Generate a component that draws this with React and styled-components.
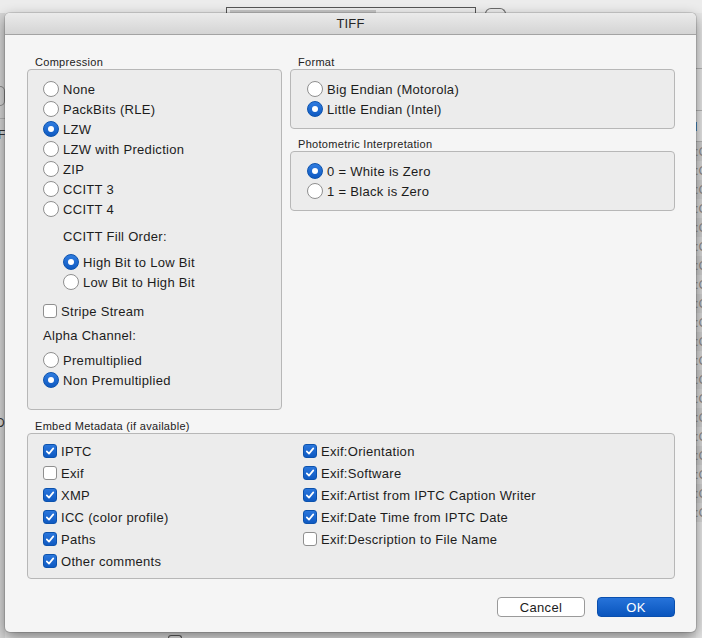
import React, { useState } from 'react';
import styled, { createGlobalStyle } from 'styled-components';

const GlobalStyle = createGlobalStyle`
  html, body {
    margin: 0;
    padding: 0;
  }
  body {
    background: #dcdcdc;
    font-family: "Liberation Sans", Arial, sans-serif;
  }
`;

const Page = styled.div`
  width: 702px;
  height: 638px;
  overflow: hidden;
  display: flex;
  flex-direction: column;
  background: #e2e2e2;
`;

const TopBar = styled.div`
  height: 13px;
  flex: none;
  display: flex;
  align-items: flex-start;
  gap: 9px;
  padding-left: 226px;
  background: #ececec;
  overflow: hidden;
`;

const PathField = styled.div`
  margin-top: 7px;
  width: 250px;
  height: 12px;
  box-sizing: border-box;
  padding: 2px 3px 0;
  border: 1px solid #565656;
  border-bottom: none;
  background: #eeeeee;
`;

const PathFill = styled.div`
  width: 146px;
  height: 3px;
  background: #c7c7c7;
`;

const RoundButton = styled.div`
  margin-top: 8px;
  width: 19px;
  height: 12px;
  border: 1px solid #6a6a6a;
  border-bottom: none;
  border-radius: 6px 6px 0 0;
`;

const Middle = styled.div`
  flex: 1;
  min-height: 0;
  display: flex;
`;

const LeftEdge = styled.div`
  width: 5px;
  flex: none;
  display: flex;
  flex-direction: column;
  overflow: hidden;
  background: #d6d6d6;
  font-size: 12px;
  color: #333;
  white-space: nowrap;
`;

const EdgeButton = styled.div`
  margin-top: 73px;
  height: 20px;
  width: 5px;
  border: 1px solid #8a8a8a;
  border-left: none;
  border-radius: 0 6px 6px 0;
  box-sizing: border-box;
`;

const EdgeLine = styled.div`
  height: ${(p) => p.$h}px;
  flex: none;
  border-bottom: 1px solid #b4b4b4;
`;

const EdgeText = styled.div`
  height: ${(p) => p.$h}px;
  line-height: ${(p) => p.$h}px;
  margin-top: ${(p) => p.$top}px;
  margin-left: ${(p) => p.$shift}px;
  flex: none;
`;

const RightEdge = styled.div`
  flex: 1;
  display: flex;
  flex-direction: column;
  overflow: hidden;
  background: #e6e6e6;
  font-size: 13px;
  white-space: nowrap;
`;

const ListRow = styled.div`
  height: 19px;
  line-height: 19px;
  flex: none;
  margin-left: -1px;
  color: #8d8d8d;
  background: ${(p) => (p.$alt ? '#d9d9d9' : '#d0d0d0')};
`;

const SheetColumn = styled.div`
  width: 691px;
  flex: none;
  display: flex;
  flex-direction: column;
`;

const Sheet = styled.div`
  position: relative;
  z-index: 1;
  height: 619px;
  flex: none;
  display: flex;
  flex-direction: column;
  background: #f5f5f5;
  border-radius: 5px;
  box-shadow: 0 0 0 1px rgba(0, 0, 0, 0.12), 0 5px 14px rgba(0, 0, 0, 0.45);
  overflow: hidden;
`;

const BelowSheet = styled.div`
  flex: 1;
  padding-left: 163px;
  display: flex;
  align-items: flex-end;
`;

const BottomPeek = styled.div`
  width: 12px;
  height: 2px;
  border: 1px solid #5a5a5a;
  border-bottom: none;
  border-radius: 4px 4px 0 0;
`;

const TitleBar = styled.div`
  height: 21px;
  flex: none;
  line-height: 21px;
  text-align: center;
  font-size: 13px;
  letter-spacing: 0.2px;
  color: #262626;
  background: linear-gradient(#ebebeb, #d4d4d4);
  border-bottom: 1px solid #a3a3a3;
`;

const Body = styled.div`
  flex: 1;
  display: flex;
  flex-direction: column;
  padding: 20px 21px 0 22px;
  color: #1c1c1c;
`;

const TopGrid = styled.div`
  display: grid;
  grid-template-columns: 255px 385px;
  column-gap: 8px;
`;

const Column = styled.div`
  display: flex;
  flex-direction: column;
  gap: 8px;
`;

const Section = styled.div`
  display: flex;
  flex-direction: column;
  flex: ${(p) => (p.$grow ? 1 : 'none')};
  margin-top: ${(p) => p.$top || 0}px;
`;

const SectionLabel = styled.div`
  height: 14px;
  line-height: 14px;
  padding-left: 8px;
  font-size: 11px;
  letter-spacing: 0.3px;
  color: #222;
`;

const GroupBox = styled.div`
  flex: 1;
  display: flex;
  flex-direction: column;
  padding: ${(p) => p.$pad || '9px 14px 9px 15px'};
  border: 1px solid #b7b7b7;
  border-radius: 4px;
  background: #ececec;
`;

const OptionRow = styled.label`
  height: ${(p) => p.$h || 20}px;
  display: flex;
  align-items: center;
  gap: 4px;
  font-size: 13px;
  letter-spacing: 0.3px;
  cursor: default;
  white-space: nowrap;
`;

const Indent = styled.div`
  display: flex;
  flex-direction: column;
  padding-left: 20px;
  margin-top: ${(p) => p.$top || 0}px;
`;

const SubLabel = styled.div`
  height: ${(p) => p.$h || 18}px;
  line-height: ${(p) => p.$h || 18}px;
  margin-top: ${(p) => p.$top || 0}px;
  padding-left: ${(p) => p.$indent || 0}px;
  font-size: 13px;
  letter-spacing: 0.3px;
`;

const Spaced = styled.div`
  display: flex;
  flex-direction: column;
  margin-top: ${(p) => p.$top || 0}px;
`;

const RadioCircle = styled.span`
  width: 16px;
  height: 16px;
  flex: none;
  box-sizing: border-box;
  border-radius: 50%;
  display: flex;
  align-items: center;
  justify-content: center;
  border: 1px solid ${(p) => (p.$on ? '#0c52ad' : '#8f8f8f')};
  background: ${(p) => (p.$on ? 'linear-gradient(#2f7ce0, #0f5ac2)' : '#ffffff')};

  &::after {
    content: '';
    display: ${(p) => (p.$on ? 'block' : 'none')};
    width: 6px;
    height: 6px;
    border-radius: 50%;
    background: #ffffff;
  }
`;

const CheckSquare = styled.span`
  width: 14px;
  height: 14px;
  flex: none;
  box-sizing: border-box;
  border-radius: 3px;
  display: flex;
  align-items: center;
  justify-content: center;
  border: 1px solid ${(p) => (p.$on ? '#0c52ad' : '#8f8f8f')};
  background: ${(p) => (p.$on ? 'linear-gradient(#2a76dc, #0f5ac2)' : '#ffffff')};
`;

const MetaGrid = styled.div`
  display: grid;
  grid-template-columns: 260px 1fr;
  grid-template-rows: repeat(6, 22px);
  grid-auto-flow: column;
`;

const ButtonRow = styled.div`
  display: flex;
  justify-content: flex-end;
  gap: 12px;
  margin-top: 18px;
`;

const DialogButton = styled.button`
  width: ${(p) => p.$w}px;
  height: 20px;
  padding: 0;
  box-sizing: border-box;
  border-radius: 4px;
  font-family: "Liberation Sans", Arial, sans-serif;
  font-size: 13px;
  letter-spacing: 0.3px;
  color: ${(p) => (p.$primary ? '#ffffff' : '#1c1c1c')};
  border: 1px solid ${(p) => (p.$primary ? '#0a4fae' : '#9a9a9a')};
  background: ${(p) => (p.$primary ? 'linear-gradient(#2673da, #0a55bd)' : '#ffffff')};
  cursor: default;
`;

function Radio({ label, on, onPick }) {
  return (
    <OptionRow onClick={onPick}>
      <RadioCircle $on={on} />
      {label}
    </OptionRow>
  );
}

function Check({ label, on, onToggle, h }) {
  return (
    <OptionRow $h={h} onClick={onToggle}>
      <CheckSquare $on={on}>
        {on && (
          <svg width="10" height="10" viewBox="0 0 10 10">
            <path d="M1.8 5.3 L4 7.6 L8.3 2.4" fill="none" stroke="#fff" strokeWidth="1.7" strokeLinecap="round" strokeLinejoin="round" />
          </svg>
        )}
      </CheckSquare>
      {label}
    </OptionRow>
  );
}

const compressions = ['None', 'PackBits (RLE)', 'LZW', 'LZW with Prediction', 'ZIP', 'CCITT 3', 'CCITT 4'];
const fillOrders = ['High Bit to Low Bit', 'Low Bit to High Bit'];
const alphas = ['Premultiplied', 'Non Premultiplied'];
const formats = ['Big Endian (Motorola)', 'Little Endian (Intel)'];
const photometrics = ['0 = White is Zero', '1 = Black is Zero'];
const metadataItems = [
  'IPTC',
  'Exif',
  'XMP',
  'ICC (color profile)',
  'Paths',
  'Other comments',
  'Exif:Orientation',
  'Exif:Software',
  'Exif:Artist from IPTC Caption Writer',
  'Exif:Date Time from IPTC Date',
  'Exif:Description to File Name',
];
const initialMeta = {
  IPTC: true,
  Exif: false,
  XMP: true,
  'ICC (color profile)': true,
  Paths: true,
  'Other comments': true,
  'Exif:Orientation': true,
  'Exif:Software': true,
  'Exif:Artist from IPTC Caption Writer': true,
  'Exif:Date Time from IPTC Date': true,
  'Exif:Description to File Name': false,
};

export default function App() {
  const [compression, setCompression] = useState('LZW');
  const [fillOrder, setFillOrder] = useState(fillOrders[0]);
  const [stripe, setStripe] = useState(false);
  const [alpha, setAlpha] = useState(alphas[1]);
  const [format, setFormat] = useState(formats[1]);
  const [photometric, setPhotometric] = useState(photometrics[0]);
  const [meta, setMeta] = useState(initialMeta);

  const toggleMeta = (key) => setMeta((m) => ({ ...m, [key]: !m[key] }));

  return (
    <>
      <GlobalStyle />
      <Page>
        <TopBar>
          <PathField>
            <PathFill />
          </PathField>
          <RoundButton />
        </TopBar>
        <Middle>
          <LeftEdge>
            <EdgeButton />
            <EdgeLine $h={12} />
            <EdgeText $h={16} $top={8} $shift={-2}>Fa</EdgeText>
            <EdgeText $h={16} $top={272} $shift={-4}>D</EdgeText>
          </LeftEdge>
          <SheetColumn>
            <Sheet>
              <TitleBar>TIFF</TitleBar>
              <Body>
                <TopGrid>
                  <Section>
                    <SectionLabel>Compression</SectionLabel>
                    <GroupBox $pad="9px 14px 19px 15px">
                      {compressions.map((c) => (
                        <Radio key={c} label={c} on={compression === c} onPick={() => setCompression(c)} />
                      ))}
                      <SubLabel $top={9} $indent={20}>CCITT Fill Order:</SubLabel>
                      <Indent $top={6}>
                        {fillOrders.map((f) => (
                          <Radio key={f} label={f} on={fillOrder === f} onPick={() => setFillOrder(f)} />
                        ))}
                      </Indent>
                      <Spaced $top={9}>
                        <Check label="Stripe Stream" on={stripe} onToggle={() => setStripe((s) => !s)} />
                      </Spaced>
                      <SubLabel $top={5} $h={20}>Alpha Channel:</SubLabel>
                      <Spaced $top={4}>
                        {alphas.map((a) => (
                          <Radio key={a} label={a} on={alpha === a} onPick={() => setAlpha(a)} />
                        ))}
                      </Spaced>
                    </GroupBox>
                  </Section>
                  <Column>
                    <Section>
                      <SectionLabel>Format</SectionLabel>
                      <GroupBox $pad="9px 14px 9px 16px">
                        {formats.map((f) => (
                          <Radio key={f} label={f} on={format === f} onPick={() => setFormat(f)} />
                        ))}
                      </GroupBox>
                    </Section>
                    <Section>
                      <SectionLabel>Photometric Interpretation</SectionLabel>
                      <GroupBox $pad="9px 14px 9px 16px">
                        {photometrics.map((p) => (
                          <Radio key={p} label={p} on={photometric === p} onPick={() => setPhotometric(p)} />
                        ))}
                      </GroupBox>
                    </Section>
                  </Column>
                </TopGrid>
                <Section $top={9}>
                  <SectionLabel>Embed Metadata (if available)</SectionLabel>
                  <GroupBox $pad="6px 14px 6px 15px">
                    <MetaGrid>
                      {metadataItems.map((item) => (
                        <Check key={item} h={22} label={item} on={meta[item]} onToggle={() => toggleMeta(item)} />
                      ))}
                    </MetaGrid>
                  </GroupBox>
                </Section>
                <ButtonRow>
                  <DialogButton $w={88}>Cancel</DialogButton>
                  <DialogButton $w={78} $primary>OK</DialogButton>
                </ButtonRow>
              </Body>
            </Sheet>
            <BelowSheet>
              <BottomPeek />
            </BelowSheet>
          </SheetColumn>
          <RightEdge>
            <EdgeLine $h={55} />
            <EdgeLine $h={41} />
            <EdgeText $h={20} $top={6} $shift={-6}>d</EdgeText>
            <EdgeLine $h={4} />
            {Array.from({ length: 20 }, (_, i) => (
              <ListRow key={i} $alt={i % 2 === 1}>:C</ListRow>
            ))}
          </RightEdge>
        </Middle>
      </Page>
    </>
  );
}
